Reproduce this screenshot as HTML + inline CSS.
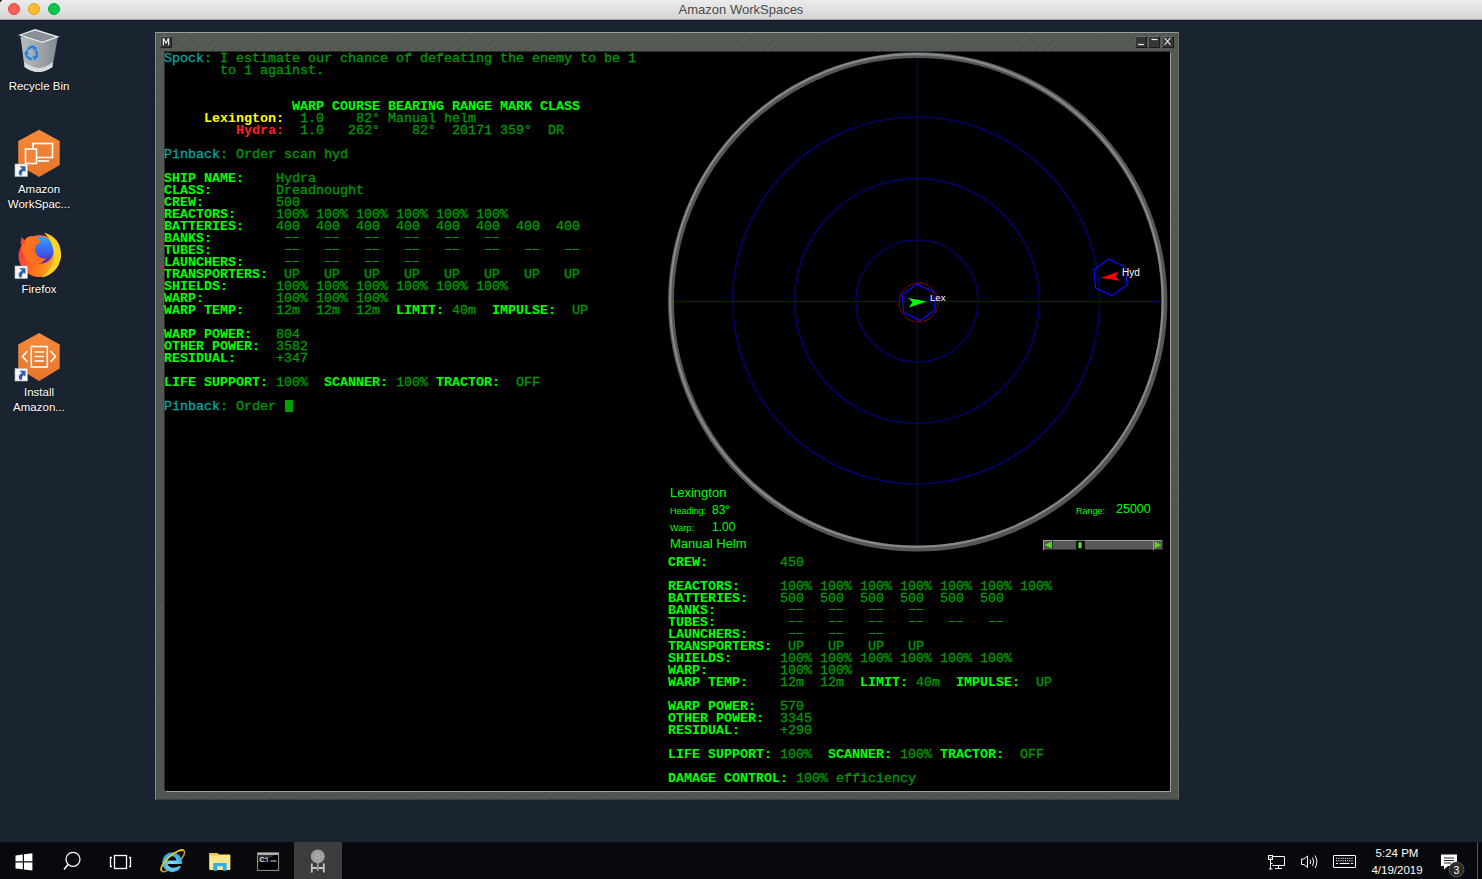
<!DOCTYPE html>
<html><head><meta charset="utf-8">
<style>
*{margin:0;padding:0;box-sizing:border-box}
html,body{width:1482px;height:879px;overflow:hidden;background:#1a2430;font-family:"Liberation Sans",sans-serif}
.abs{position:absolute}
#mactitle{position:absolute;left:0;top:0;width:1482px;height:20px;background:linear-gradient(#ececec,#d5d5d5);border-bottom:1px solid #a8a8a8}
#mactitle .t{position:absolute;left:0;width:1482px;top:2px;text-align:center;font-size:13px;color:#4a4a4a}
.tl{position:absolute;top:3px;width:12px;height:12px;border-radius:50%}
.icon-label{position:absolute;color:#fff;font-size:11.5px;text-align:center;line-height:15px;text-shadow:0 0 2px #000}
#frame{position:absolute;left:155px;top:32px;width:1024px;height:768px;
 background:
  repeating-linear-gradient(135deg,rgba(255,255,255,0.03) 0 1.5px,rgba(0,0,0,0.0) 1.5px 6px),
  linear-gradient(#535853,#4e534f);
 border-top:1px solid #9a9e9a;border-left:1px solid #868a86;border-right:1px solid #6a6e6a;border-bottom:1px solid #3e423e}
#inner{position:absolute;left:165px;top:52px;width:1005px;height:739px;background:#000;
 box-shadow:1px 1px 0 #9ea29e,-1px -1px 0 #2c2e2c}
.btn{position:absolute;top:36px;width:12px;height:12px;background:#353735;border-top:1px solid #686c68;border-left:1px solid #5e625e;border-bottom:1px solid #1a1b1a;border-right:1px solid #1a1b1a;color:#e8e8e8;font-size:10px;font-weight:bold;line-height:10px;text-align:center}
pre.term{position:absolute;font-family:"Liberation Mono",monospace;font-size:13.333px;line-height:12px;color:#009c00;white-space:pre;-webkit-text-stroke:0.3px currentColor}
.L{color:#00ff00;font-weight:bold;-webkit-text-stroke:0}
.d{position:relative;top:-1px}
.c{color:#00a8a8}
.y{color:#ffff00;font-weight:bold;-webkit-text-stroke:0}
.r{color:#ff2020;font-weight:bold;-webkit-text-stroke:0}
#taskbar{position:absolute;left:0;top:842px;width:1482px;height:37px;background:#07090c}
</style></head><body>

<div class="abs" style="left:0;top:20px;width:1482px;height:1px;background:#0f1722"></div>
<div id="mactitle">
 <div class="tl" style="left:8px;background:#fe5f57;border:0.6px solid #e2463f"></div>
 <div class="tl" style="left:28px;background:#febc2e;border:0.6px solid #e1a116"></div>
 <div class="tl" style="left:48px;background:#06c84c;border:0.6px solid #03a93a"></div>
 <div class="t">Amazon WorkSpaces</div>
 <div class="abs" style="left:0;top:0;width:3px;height:3px;background:radial-gradient(circle at 3px 3px,transparent 2.5px,#222 3px)"></div>
</div>


<svg class="abs" style="left:0;top:20px" width="80" height="400" viewBox="0 20 80 400">
 <defs>
  <linearGradient id="binb" x1="0" y1="0" x2="1" y2="0"><stop offset="0" stop-color="#c9cdd1"/><stop offset="0.5" stop-color="#aeb3b8"/><stop offset="1" stop-color="#8f959b"/></linearGradient>
  <linearGradient id="hexg" x1="0" y1="0" x2="0" y2="1"><stop offset="0" stop-color="#f68a3a"/><stop offset="1" stop-color="#e4762a"/></linearGradient>
  <radialGradient id="ffglobe" cx="0.55" cy="0.4" r="0.6"><stop offset="0" stop-color="#5ac8fa"/><stop offset="0.5" stop-color="#2d6ff0"/><stop offset="1" stop-color="#5b2bb5"/></radialGradient>
  <linearGradient id="fffox" x1="0" y1="0" x2="1" y2="1"><stop offset="0" stop-color="#ff3b3b"/><stop offset="0.5" stop-color="#ff7a18"/><stop offset="1" stop-color="#ffd02a"/></linearGradient>
 </defs>
 <!-- recycle bin -->
 <path d="M20.5,36.5 L24.5,67 Q32,72.5 40,72 Q47,71 52.5,67 L57.8,37 Z" fill="url(#binb)" opacity="0.9"/>
 <path d="M24.5,62 Q32,68 40,68 Q47,67 52.5,62 L52.5,67 Q46,71.5 40,72 Q32,72.5 24.5,67Z" fill="#d8dcdf"/>
 <path d="M20,35 L35,29.8 L57.8,36.8 L42.3,42.3 Z" fill="#8a8f95" stroke="#e6e9ec" stroke-width="1.3"/>
 <g fill="none" stroke="#1a86e8" stroke-width="2.4" stroke-linecap="round">
  <path d="M28.5,49 Q31,45.5 34,47.5"/>
  <path d="M36,51 Q38,55 35.5,58"/>
  <path d="M31,59 Q26.5,58 26,53"/>
 </g>
 <g fill="#1a86e8">
  <path d="M33,45 L37.5,48.5 L33,50.5Z"/>
  <path d="M38.5,56 L34,60.5 L32.5,56Z"/>
  <path d="M24,54.5 L26.5,49.5 L29,53.5Z"/>
 </g>
 <!-- workspaces -->
 <polygon points="39.2,129.7 59.7,141 59.7,165 39.2,176.9 18.2,165 18.2,141" fill="url(#hexg)"/>
 <g fill="none" stroke="#fff" stroke-width="1.6">
  <rect x="33" y="143.5" width="19.5" height="14"/>
  <rect x="25.5" y="149" width="11" height="14.5" fill="#f3843a"/>
 </g>
 <path d="M38,161 L49,161" stroke="#fff" stroke-width="1.6"/>
 <!-- firefox -->
 <defs>
  <linearGradient id="ffbody" x1="0" y1="0.3" x2="1" y2="0.7"><stop offset="0" stop-color="#ff2f48"/><stop offset="0.45" stop-color="#ff6a1c"/><stop offset="1" stop-color="#ffb51e"/></linearGradient>
  <linearGradient id="ffg2" x1="0" y1="0" x2="0" y2="1"><stop offset="0" stop-color="#2ea8ff"/><stop offset="0.6" stop-color="#3a5de8"/><stop offset="1" stop-color="#5a22a8"/></linearGradient>
 </defs>
 <circle cx="39.5" cy="256" r="21" fill="url(#ffbody)"/>
 <circle cx="40.5" cy="250" r="13.5" fill="url(#ffg2)"/>
 <path d="M21.5,247 Q24,237 31,236 Q38,236 41,242 L37,244 Q34,247 35.5,252 Q38,259 46,258.5 Q41,265 33,264 Q23,261 21.5,247Z" fill="#ff6f1f"/>
 <path d="M21.5,237 L26,242 L20.5,245Z" fill="#ff4a2a"/>
 <path d="M44,232.5 Q62,238 61,257 Q58,273 42,277.5 Q54,267 54,254 Q53,241 44,232.5Z" fill="#ffd22a"/>
 <!-- install -->
 <polygon points="39.2,333 59.7,344.5 59.7,368.4 39.2,380.9 18.2,368.4 18.2,344.5" fill="url(#hexg)"/>
 <g fill="none" stroke="#fff" stroke-width="1.6">
  <rect x="31.3" y="346.5" width="16" height="20.5"/>
  <path d="M34.5,352 H44 M34.5,356.5 H44 M34.5,361 H44"/>
  <path d="M27.5,351 L22.5,356.5 L27.5,362 M50.5,351 L55.5,356.5 L50.5,362"/>
 </g>
 <!-- shortcut overlays -->
 <g>
  <rect x="15" y="164" width="12.5" height="12.5" fill="#f4f6f6" stroke="#b8b8b8" stroke-width="0.6"/>
  <path transform="translate(15,164)" d="M4.2,2.3 L10.5,2.2 L10.5,8.3 L8.8,6.6 Q6.4,8.3 6.9,11.2 L5.1,11.6 Q3,9.6 3.8,7.6 Q4.7,5.7 7.1,4.6 Z" fill="#2d5fae"/>
  <rect x="15" y="266" width="12.5" height="12.5" fill="#f4f6f6" stroke="#b8b8b8" stroke-width="0.6"/>
  <path transform="translate(15,266)" d="M4.2,2.3 L10.5,2.2 L10.5,8.3 L8.8,6.6 Q6.4,8.3 6.9,11.2 L5.1,11.6 Q3,9.6 3.8,7.6 Q4.7,5.7 7.1,4.6 Z" fill="#2d5fae"/>
  <rect x="15" y="368.5" width="12.5" height="12.5" fill="#f4f6f6" stroke="#b8b8b8" stroke-width="0.6"/>
  <path transform="translate(15,368.5)" d="M4.2,2.3 L10.5,2.2 L10.5,8.3 L8.8,6.6 Q6.4,8.3 6.9,11.2 L5.1,11.6 Q3,9.6 3.8,7.6 Q4.7,5.7 7.1,4.6 Z" fill="#2d5fae"/>
 </g>
</svg>
<div class="icon-label" style="left:0;width:78px;top:79px">Recycle Bin</div>
<div class="icon-label" style="left:0;width:78px;top:181.5px">Amazon<br>WorkSpac...</div>
<div class="icon-label" style="left:0;width:78px;top:282px">Firefox</div>
<div class="icon-label" style="left:0;width:78px;top:385px">Install<br>Amazon...</div>


<div id="frame"></div>
<div id="inner"></div>
<div class="btn" style="left:160px;"></div>
<svg class="abs" style="left:160px;top:36px" width="12" height="12"><path d="M2.8,9.2 V2.2 H4.2 L6,6 L7.8,2.2 H9.2 V9.2 H8 V4.6 L6.5,7.6 H5.5 L4,4.6 V9.2Z" fill="#ececec"/></svg>
<div class="btn" style="left:1135px;"></div>
<div class="btn" style="left:1148px;"></div>
<div class="btn" style="left:1162px;"></div>
<svg class="abs" style="left:1130px;top:32px" width="50" height="20">
 <path d="M8,12.5 H14" stroke="#e6e6e6" stroke-width="1.2"/>
 <path d="M21.5,7.5 H27.5" stroke="#e6e6e6" stroke-width="1.2"/>
 <path d="M34.5,5.8 L40.5,12.8 M40.5,5.8 L34.5,12.8" stroke="#e6e6e6" stroke-width="1.1"/>
</svg>


<svg class="abs" style="left:0;top:0" width="1482" height="879" viewBox="0 0 1482 879">
 <defs>
  <radialGradient id="ring" gradientUnits="userSpaceOnUse" cx="917.5" cy="301.5" r="250">
   <stop offset="0" stop-color="#000" stop-opacity="0"/>
   <stop offset="0.972" stop-color="#000" stop-opacity="0"/>
   <stop offset="0.979" stop-color="#3e423e"/>
   <stop offset="0.990" stop-color="#858985"/>
   <stop offset="0.997" stop-color="#5e625e"/>
   <stop offset="1" stop-color="#262826"/>
  </radialGradient>
 </defs>
 <g fill="none" stroke="#00008a" stroke-width="1.2">
  <line x1="917.5" y1="58" x2="917.5" y2="546"/>
  <line x1="674" y1="301.5" x2="1161" y2="301.5"/>
  <circle cx="917" cy="301" r="61"/>
  <circle cx="917" cy="301" r="122.3"/>
  <circle cx="916.2" cy="300.5" r="183.5"/>
 </g>
 <circle cx="917.7" cy="301.8" r="246.7" fill="none" stroke="#545854" stroke-width="5.9"/>
 <circle cx="916.45" cy="300.5" r="246.3" fill="none" stroke="#868a86" stroke-width="2.2"/>
 <circle cx="918.5" cy="302.5" r="19.5" fill="none" stroke="#8c0000" stroke-width="1"/>
 <polygon points="916.91,284.18 933.47,291.73 935.21,309.85 920.39,320.42 903.83,312.87 902.09,294.75" fill="none" stroke="#0a0aff" stroke-width="1.25"/>
 <polygon points="1108.71,259.28 1125.27,266.83 1127.01,284.95 1112.19,295.52 1095.63,287.97 1093.89,269.85" fill="none" stroke="#0a0aff" stroke-width="1.25"/>
 <path d="M926.7,301.4 L908.3,298.1 L912.4,302.2 L909,307.5 Z" fill="#00ff00"/>
 <path d="M1101.2,277.7 L1118.9,271.5 L1115.2,276.3 L1119.6,280.7 Z" fill="#ff0000"/>
 <text x="930" y="301" font-family="Liberation Sans" font-size="9.6" fill="#fff">Lex</text>
 <text x="1122" y="276" font-family="Liberation Sans" font-size="10" fill="#fff">Hyd</text>
</svg>
<div class="abs" style="left:670px;top:485px;font-size:13px;color:#00ff00;white-space:nowrap">Lexington</div>
<div class="abs" style="left:670px;top:506px;font-size:9px;color:#00ff00;white-space:nowrap">Heading:</div>
<div class="abs" style="left:712px;top:502.5px;font-size:12px;color:#00ff00;white-space:nowrap">83°</div>
<div class="abs" style="left:670px;top:523px;font-size:9px;color:#00ff00;white-space:nowrap">Warp:</div>
<div class="abs" style="left:712px;top:520px;font-size:12px;color:#00ff00;white-space:nowrap">1.00</div>
<div class="abs" style="left:670px;top:535.5px;font-size:13px;color:#00ff00;white-space:nowrap">Manual Helm</div>
<div class="abs" style="left:1076px;top:506px;font-size:9px;color:#00ff00;white-space:nowrap">Range:</div>
<div class="abs" style="left:1116px;top:502px;font-size:12.5px;color:#00ff00;white-space:nowrap">25000</div>
<svg class="abs" style="left:1043px;top:540px" width="120" height="10">
 <rect x="0" y="0" width="120" height="10" fill="#585858"/>
 <rect x="0" y="0" width="120" height="1" fill="#9c9c9c"/>
 <rect x="0" y="9" width="120" height="1" fill="#2e2e2e"/>
 <rect x="0" y="0" width="1" height="10" fill="#9c9c9c"/>
 <rect x="9" y="0" width="1" height="10" fill="#2e2e2e"/>
 <rect x="110" y="0" width="1" height="10" fill="#9c9c9c"/>
 <rect x="119" y="0" width="1" height="10" fill="#2e2e2e"/>
 <path d="M1.8,5 L8.8,1.5 L8.8,8.5Z" fill="#5ad81e"/>
 <path d="M118.5,5 L111.8,1.5 L111.8,8.5Z" fill="#5ad81e"/>
 <rect x="33" y="0" width="9" height="10" fill="#0a0a0a"/>
 <rect x="33" y="0" width="9" height="1" fill="#777"/>
 <rect x="35.5" y="2.2" width="3" height="6" fill="#6ee02a"/>
</svg>

<pre class="term" style="left:668px;top:557px"><span class="L">CREW:</span>         450

<span class="L">REACTORS:</span>     100% 100% 100% 100% 100% 100% 100%
<span class="L">BATTERIES:</span>    500  500  500  500  500  500
<span class="L">BANKS:</span>         <span class="d">––</span>   <span class="d">––</span>   <span class="d">––</span>   <span class="d">––</span>
<span class="L">TUBES:</span>         <span class="d">––</span>   <span class="d">––</span>   <span class="d">––</span>   <span class="d">––</span>   <span class="d">––</span>   <span class="d">––</span>
<span class="L">LAUNCHERS:</span>     <span class="d">––</span>   <span class="d">––</span>   <span class="d">––</span>
<span class="L">TRANSPORTERS:</span>  UP   UP   UP   UP
<span class="L">SHIELDS:</span>      100% 100% 100% 100% 100% 100%
<span class="L">WARP:</span>         100% 100%
<span class="L">WARP TEMP:</span>    12m  12m  <span class="L">LIMIT:</span> 40m  <span class="L">IMPULSE:</span>  UP

<span class="L">WARP POWER:</span>   570
<span class="L">OTHER POWER:</span>  3345
<span class="L">RESIDUAL:</span>     +290

<span class="L">LIFE SUPPORT:</span> 100%  <span class="L">SCANNER:</span> 100% <span class="L">TRACTOR:</span>  OFF

<span class="L">DAMAGE CONTROL:</span> 100% efficiency</pre>

<pre class="term" style="left:164px;top:53px"><span class="c">Spock</span>: I estimate our chance of defeating the enemy to be 1
       to 1 against.


                <span class="L">WARP COURSE BEARING RANGE MARK CLASS</span>
     <span class="y">Lexington:</span>  1.0    82° Manual helm
         <span class="r">Hydra:</span>  1.0   262°    82°  20171 359°  DR

<span class="c">Pinback</span>: Order scan hyd

<span class="L">SHIP NAME:</span>    Hydra
<span class="L">CLASS:</span>        Dreadnought
<span class="L">CREW:</span>         500
<span class="L">REACTORS:</span>     100% 100% 100% 100% 100% 100%
<span class="L">BATTERIES:</span>    400  400  400  400  400  400  400  400
<span class="L">BANKS:</span>         <span class="d">––</span>   <span class="d">––</span>   <span class="d">––</span>   <span class="d">––</span>   <span class="d">––</span>   <span class="d">––</span>
<span class="L">TUBES:</span>         <span class="d">––</span>   <span class="d">––</span>   <span class="d">––</span>   <span class="d">––</span>   <span class="d">––</span>   <span class="d">––</span>   <span class="d">––</span>   <span class="d">––</span>
<span class="L">LAUNCHERS:</span>     <span class="d">––</span>   <span class="d">––</span>   <span class="d">––</span>   <span class="d">––</span>
<span class="L">TRANSPORTERS:</span>  UP   UP   UP   UP   UP   UP   UP   UP
<span class="L">SHIELDS:</span>      100% 100% 100% 100% 100% 100%
<span class="L">WARP:</span>         100% 100% 100%
<span class="L">WARP TEMP:</span>    12m  12m  12m  <span class="L">LIMIT:</span> 40m  <span class="L">IMPULSE:</span>  UP

<span class="L">WARP POWER:</span>   804
<span class="L">OTHER POWER:</span>  3582
<span class="L">RESIDUAL:</span>     +347

<span class="L">LIFE SUPPORT:</span> 100%  <span class="L">SCANNER:</span> 100% <span class="L">TRACTOR:</span>  OFF

<span class="c">Pinback</span>: Order </pre>
<div class="abs" style="left:285px;top:400px;width:8px;height:12px;background:#00a000"></div>

<div id="taskbar">
 <div class="abs" style="left:294px;top:0;width:48px;height:37px;background:#3b3c3e"></div>
 <svg class="abs" style="left:0;top:0" width="1482" height="37" viewBox="0 842 1482 37">
  <!-- windows -->
  <g fill="#fff"><path d="M15.5,855.5 L22.8,854.5 L22.8,861.2 L15.5,861.2Z"/><path d="M24,854.3 L32.4,853.2 L32.4,861.2 L24,861.2Z"/><path d="M15.5,862.4 L22.8,862.4 L22.8,869.3 L15.5,868.4Z"/><path d="M24,862.4 L32.4,862.4 L32.4,870.4 L24,869.5Z"/></g>
  <!-- search -->
  <circle cx="73" cy="859.3" r="7" fill="none" stroke="#fff" stroke-width="1.3"/>
  <path d="M68,864.5 L64,869.5" stroke="#fff" stroke-width="1.5"/>
  <!-- task view -->
  <g fill="none" stroke="#fff" stroke-width="1.3"><rect x="114.5" y="855.5" width="12" height="13"/><path d="M112,857.5 H110.5 V866.5 H112 M129,857.5 H130.5 V866.5 H129"/></g>
  <!-- IE -->
  <defs><radialGradient id="ieg" cx="0.5" cy="0.6" r="0.6"><stop offset="0" stop-color="#8fe6ff"/><stop offset="1" stop-color="#2b9ee0"/></radialGradient></defs>
  <path d="M161.65,870.84 A15,5.2 -42 0 0 183.95,850.76" fill="none" stroke="#c99a10" stroke-width="1.6"/>
  <circle cx="172.2" cy="862.2" r="10" fill="url(#ieg)"/>
  <path d="M167.3,860.6 Q168.5,856.3 172,856.3 Q175.8,856.3 176.4,860.6 Z" fill="#05070a"/>
  <path d="M182.5,864 L167.6,864 Q169,867.8 173,867.8 Q177,867.8 179,866 L182.5,866.8Z" fill="#05070a"/>
  <path d="M161.65,870.84 A15,5.2 -42 0 1 183.95,850.76" fill="none" stroke="#f2c114" stroke-width="1.8"/>
  <!-- explorer -->
  <path d="M209.2,854 Q209.2,852.9 210.3,852.9 L217.5,852.9 L219,854.6 L229.4,854.6 Q230.4,854.6 230.4,855.6 L230.4,869 Q230.4,870 229.4,870 L210.2,870 Q209.2,870 209.2,869Z" fill="#fde68e"/>
  <path d="M209.2,854 Q209.2,852.9 210.3,852.9 L217.5,852.9 L219,855.6 L209.2,855.6Z" fill="#f3c03c"/>
  <path d="M213.2,870.8 L213.2,863.6 Q213.2,862.9 214,862.9 L226,862.9 Q226.7,862.9 226.7,863.6 L226.7,870.8 L222.8,870.8 L222.8,866.3 L217.3,866.3 L217.3,870.8Z" fill="#2ab2ee"/>
  <!-- cmd -->
  <rect x="257.6" y="852.8" width="21" height="17.6" fill="#000" stroke="#9a9a9a" stroke-width="1"/>
  <rect x="258" y="853.2" width="20.2" height="1.6" fill="#d6d6d6"/>
  <path d="M258.2,855 L274,855 L270,858 Q262,859 258.2,863Z" fill="#3a3a3a" opacity="0.8"/>
  <text x="259.5" y="861.5" font-family="Liberation Sans" font-weight="bold" font-size="6.5" fill="#e0e0e0">C:\</text>
  <path d="M270.5,861 H276.5" stroke="#e0e0e0" stroke-width="1"/>
  <!-- starship -->
  <circle cx="317.8" cy="856.4" r="7" fill="#9c9c9c"/>
  <circle cx="317.8" cy="856.4" r="4.5" fill="none" stroke="#c0c0c0" stroke-width="0.8" stroke-dasharray="1.2 1.2"/>
  <circle cx="317.8" cy="856.6" r="2" fill="none" stroke="#c4c4c4" stroke-width="0.9"/>
  <g stroke="#c2c2c2" stroke-width="1.8" fill="none"><path d="M311.8,863.5 V872.5 M323.8,863.5 V872.5 M311.8,868 H323.8"/><path d="M317.8,863 V871" stroke="#9c9c9c" stroke-width="1.6"/></g>
  <!-- tray: network -->
  <g fill="none" stroke="#fff" stroke-width="1">
   <path d="M1272.5,856.5 H1284.5 V865.5 H1272.5"/>
   <path d="M1278.5,865.5 V868.5 M1275,868.5 H1282"/>
   <rect x="1268.5" y="855.5" width="4" height="4"/>
   <path d="M1270.5,859.5 V869 M1269,869 H1272.5 M1270.5,863.5 H1272.5"/>
  </g>
  <path d="M1269.5,857.5 L1270.5,858.5 L1271.8,856.8" stroke="#fff" stroke-width="0.8" fill="none"/>
  <!-- volume -->
  <g fill="none" stroke="#fff" stroke-width="1">
   <path d="M1301.5,859 H1304 L1307.5,856 V867.5 L1304,864.5 H1301.5Z"/>
   <path d="M1310,859.5 Q1311.5,861.8 1310,864 M1312.5,857.5 Q1315,861.8 1312.5,866 M1315,855.5 Q1318.8,861.8 1315,868"/>
  </g>
  <!-- keyboard -->
  <g fill="none" stroke="#fff" stroke-width="1"><rect x="1333.5" y="855.5" width="22" height="12" rx="0.5"/></g>
  <g fill="#fff">
   <rect x="1336" y="857.8" width="1.2" height="1"/><rect x="1338.2" y="857.8" width="1.2" height="1"/><rect x="1340.4" y="857.8" width="1.2" height="1"/><rect x="1342.6" y="857.8" width="1.2" height="1"/><rect x="1344.8" y="857.8" width="1.2" height="1"/><rect x="1347" y="857.8" width="1.2" height="1"/><rect x="1349.2" y="857.8" width="1.2" height="1"/><rect x="1351.4" y="857.8" width="1.2" height="1"/>
   <rect x="1336" y="860.3" width="1.2" height="1"/><rect x="1338.2" y="860.3" width="1.2" height="1"/><rect x="1340.4" y="860.3" width="1.2" height="1"/><rect x="1342.6" y="860.3" width="1.2" height="1"/><rect x="1344.8" y="860.3" width="1.2" height="1"/><rect x="1347" y="860.3" width="1.2" height="1"/><rect x="1349.2" y="860.3" width="1.2" height="1"/><rect x="1351.4" y="860.3" width="1.2" height="1"/>
   <rect x="1336" y="863" width="2" height="1"/><rect x="1339.5" y="863" width="10" height="1"/><rect x="1351" y="863" width="2" height="1"/>
  </g>
  <!-- notification -->
  <path d="M1441,854.5 H1457 V866 H1448 L1444,869.5 V866 H1441Z" fill="#fff"/>
  <path d="M1444,858 H1454 M1444,860.5 H1454 M1444,863 H1451" stroke="#111" stroke-width="0.9"/>
  <circle cx="1456.5" cy="869.5" r="7.5" fill="#2a2a2a" stroke="#555" stroke-width="1"/>
  <text x="1456.5" y="873.5" text-anchor="middle" font-family="Liberation Sans" font-size="10.5" fill="#fff">3</text>
  <rect x="1477" y="842" width="1" height="37" fill="#555"/>
 </svg>
 <div class="abs" style="left:1347px;top:3px;width:100px;text-align:center;color:#fff;font-size:11.5px;line-height:17px">5:24 PM<br>4/19/2019</div>
</div>

</body></html>
